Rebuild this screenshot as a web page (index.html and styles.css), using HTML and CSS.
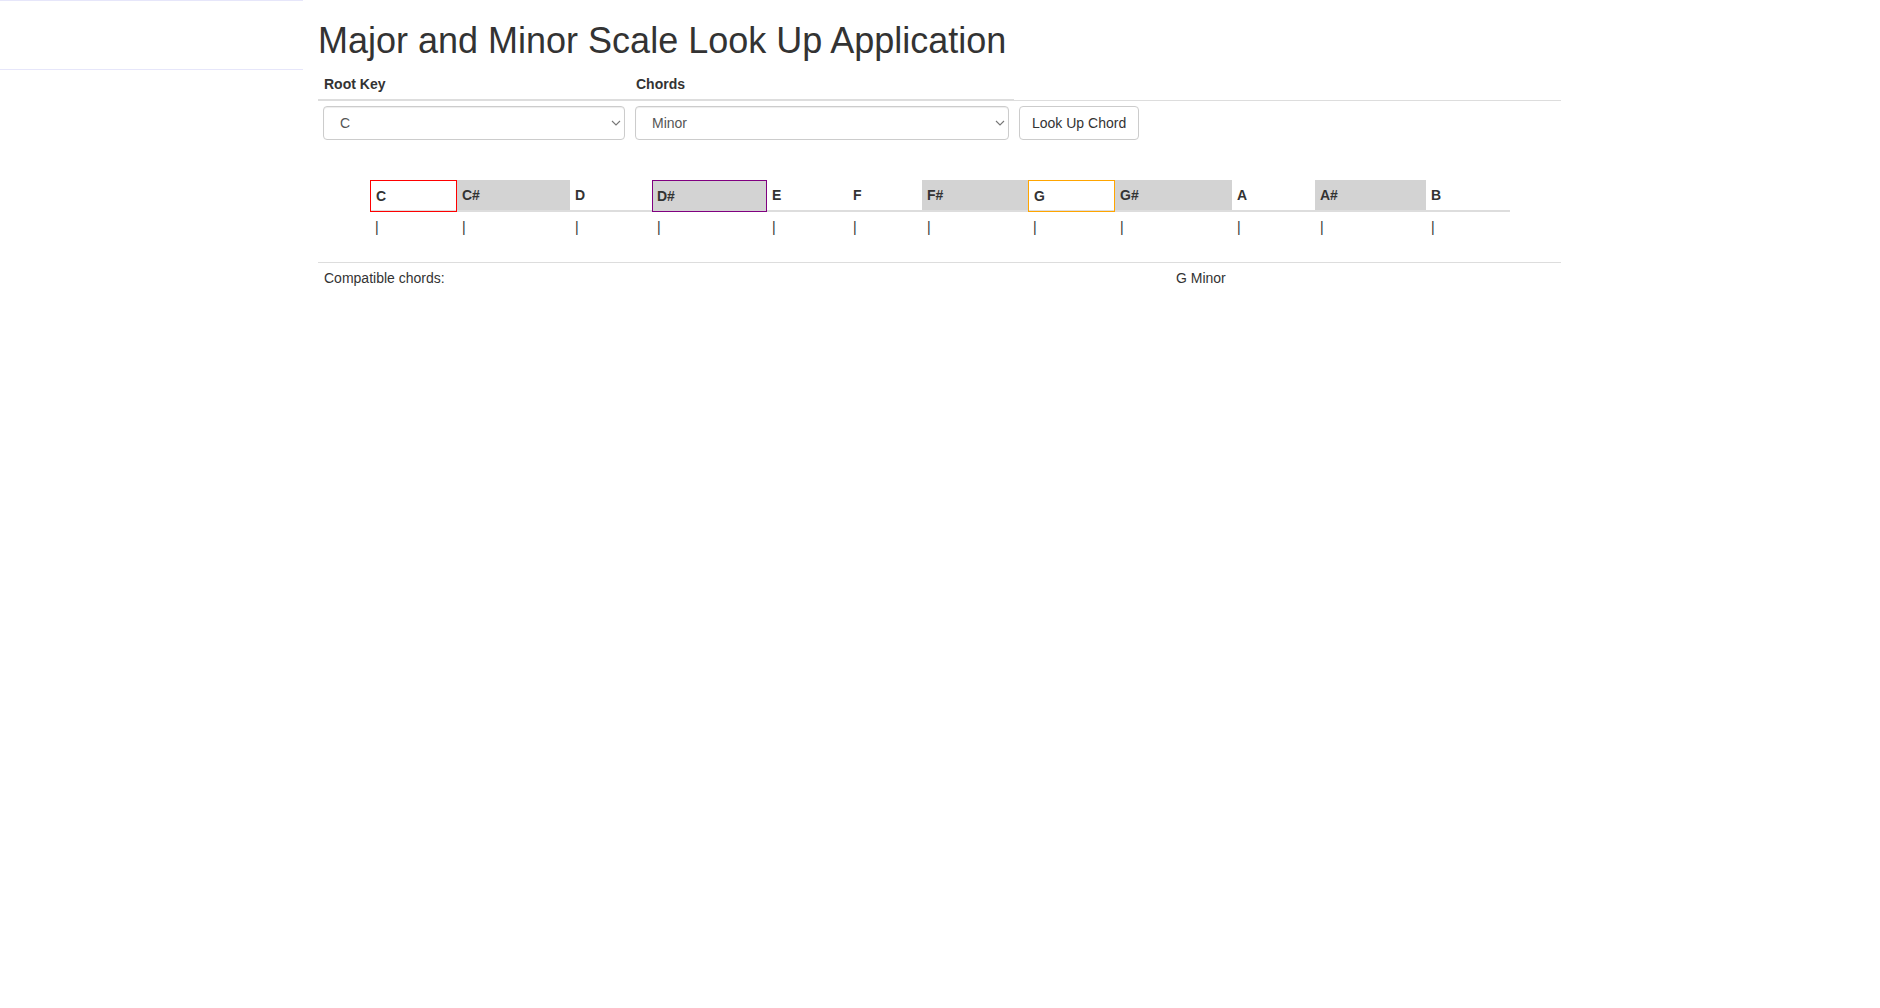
FILE: index.html
```html
<!DOCTYPE html>
<html lang="en">
<head>
<meta charset="utf-8">
<title>Major and Minor Scale Look Up Application</title>
<link rel="stylesheet" href="styles.css">
</head>
<body>
<div class="page">
  <aside class="sidebar">
    <div class="sidebar-nav"></div>
  </aside>
  <main class="main">
    <h1 class="title">Major and Minor Scale Look Up Application</h1>

    <div class="field-head">
      <div class="labels">
        <div class="label col-root">Root Key</div>
        <div class="label col-chord">Chords</div>
      </div>
    </div>

    <div class="controls">
      <div class="col-root">
        <div class="select-wrap">
          <select class="form-control">
            <option selected>C</option>
            <option>C#</option>
            <option>D</option>
            <option>D#</option>
            <option>E</option>
            <option>F</option>
            <option>F#</option>
            <option>G</option>
            <option>G#</option>
            <option>A</option>
            <option>A#</option>
            <option>B</option>
          </select>
          <svg class="chevron" width="10" height="6" viewBox="0 0 10 6" aria-hidden="true"><path d="M1 1 L5 5 L9 1" fill="none" stroke="#777" stroke-width="1.1"/></svg>
        </div>
      </div>
      <div class="col-chord">
        <div class="select-wrap">
          <select class="form-control">
            <option>Major</option>
            <option selected>Minor</option>
          </select>
          <svg class="chevron" width="10" height="6" viewBox="0 0 10 6" aria-hidden="true"><path d="M1 1 L5 5 L9 1" fill="none" stroke="#777" stroke-width="1.1"/></svg>
        </div>
      </div>
      <div class="col-btn">
        <button class="btn" type="button">Look Up Chord</button>
      </div>
    </div>

    <div class="scale">
      <div class="notes">
        <div class="note root">C</div>
        <div class="note sharp">C#</div>
        <div class="note">D</div>
        <div class="note sharp third">D#</div>
        <div class="note">E</div>
        <div class="note">F</div>
        <div class="note sharp">F#</div>
        <div class="note fifth">G</div>
        <div class="note sharp">G#</div>
        <div class="note">A</div>
        <div class="note sharp">A#</div>
        <div class="note">B</div>
      </div>
      <div class="ticks">
        <div class="tick">|</div>
        <div class="tick">|</div>
        <div class="tick">|</div>
        <div class="tick">|</div>
        <div class="tick">|</div>
        <div class="tick">|</div>
        <div class="tick">|</div>
        <div class="tick">|</div>
        <div class="tick">|</div>
        <div class="tick">|</div>
        <div class="tick">|</div>
        <div class="tick">|</div>
      </div>
    </div>

    <div class="compat">
      <div class="compat-label">Compatible chords:</div>
      <div class="compat-value">G Minor</div>
    </div>
  </main>
</div>
</body>
</html>
```

FILE: styles.css
```css
* {
  box-sizing: border-box;
}

html, body {
  margin: 0;
  padding: 0;
  background: #fff;
}

body {
  font-family: "Liberation Sans", Arial, Helvetica, sans-serif;
  font-size: 14px;
  line-height: 20px;
  color: #333;
}

.page {
  display: flex;
  align-items: flex-start;
}

.sidebar {
  flex: none;
  width: 303px;
}

.sidebar-nav {
  height: 70px;
  border-top: 1px solid #e6e6fa;
  border-bottom: 1px solid #e6e6fa;
}

.main {
  flex: none;
  width: 1273px;
  padding: 0 15px;
}

.title {
  font-size: 36px;
  font-weight: 500;
  line-height: 40px;
  margin: 21px 0 9px;
  color: #333;
}

/* header labels */
.field-head {
  height: 31px;
  border-bottom: 1px solid #ddd;
}

.labels {
  display: flex;
  width: 696px;
  height: 31px;
  border-bottom: 2px solid #ddd;
}

.col-root {
  flex: none;
  width: 312px;
}

.col-chord {
  flex: none;
  width: 384px;
}

.label {
  font-weight: bold;
  padding: 4px 6px 0;
}

/* controls */
.controls {
  display: flex;
  padding-top: 5px;
}

.controls .col-root,
.controls .col-chord {
  padding: 0 5px;
}

.col-btn {
  padding-left: 5px;
}

.select-wrap {
  position: relative;
}

.form-control {
  display: block;
  width: 100%;
  height: 34px;
  padding: 6px 30px 6px 16px;
  font-family: inherit;
  font-size: 14px;
  line-height: 20px;
  color: #555;
  background-color: #fff;
  border: 1px solid #ccc;
  border-radius: 4px;
  box-shadow: inset 0 1px 1px rgba(0, 0, 0, 0.075);
  -webkit-appearance: none;
  appearance: none;
}

.chevron {
  position: absolute;
  right: 4px;
  top: 14px;
  pointer-events: none;
}

.btn {
  display: inline-block;
  height: 34px;
  padding: 6px 12px;
  font-family: inherit;
  font-size: 14px;
  line-height: 20px;
  color: #333;
  background-color: #fff;
  border: 1px solid #ccc;
  border-radius: 4px;
  cursor: pointer;
}

/* scale */
.scale {
  margin-top: 40px;
  margin-left: 52px;
}

.notes,
.ticks {
  display: grid;
  grid-template-columns: 87px 113px 82px 115px 81px 74px 106px 87px 117px 83px 111px 84px;
  width: 1140px;
}

.notes {
  grid-template-rows: 30px;
  height: 32px;
  border-bottom: 2px solid #ddd;
}

.note {
  align-self: start;
  height: 30px;
  padding: 5px 5px;
  font-weight: bold;
  color: #333;
}

.note.sharp {
  background: #d3d3d3;
}

.note.root,
.note.third,
.note.fifth {
  height: 32px;
  padding: 5px 5px;
  border: 1px solid;
  position: relative;
}

.note.root {
  border-color: #ff0000;
}

.note.third {
  border-color: #800080;
  padding-left: 4px;
}

.note.fifth {
  border-color: #ffa500;
}

.ticks {
  margin-top: 5px;
}

.tick {
  padding-left: 5px;
  color: #333;
}

/* compatible chords */
.compat {
  display: grid;
  grid-template-columns: 852px 1fr;
  width: 1243px;
  margin-top: 25px;
  padding-top: 5px;
  border-top: 1px solid #ddd;
}

.compat-label,
.compat-value {
  padding-left: 6px;
}
```
